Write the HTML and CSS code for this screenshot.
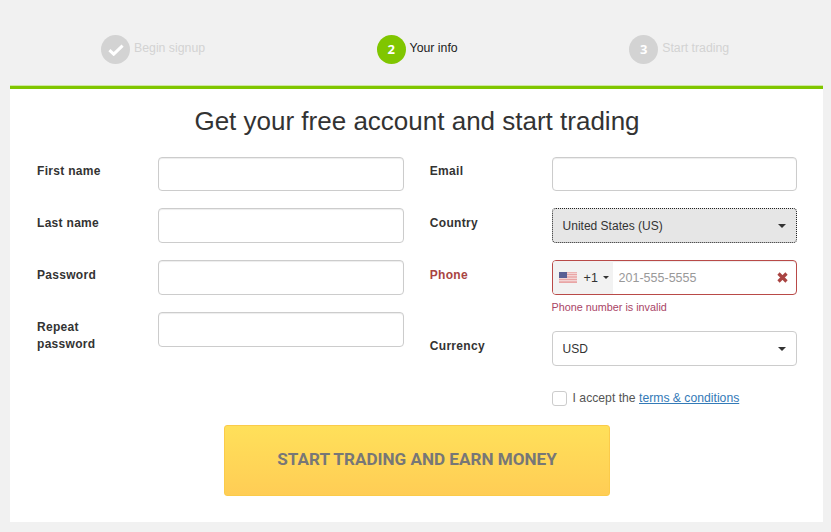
FILE: index.html
```html
<!DOCTYPE html>
<html lang="en">
<head>
  <meta charset="UTF-8">
  <meta name="viewport" content="width=device-width, initial-scale=1.0">
  <title>Get your free account</title>
  <link rel="stylesheet" href="styles.css">
</head>
<body>
  <!-- Steps -->
  <div class="steps">
    <div class="step done">
      <span class="step-circle">
        <svg width="16" height="12" viewBox="0 0 16 12"><path d="M1.4 6.2l4.3 4L14.6 1.6" fill="none" stroke="#fff" stroke-width="3"/></svg>
      </span>
      Begin signup
    </div>
    <div class="step active">
      <span class="step-circle">2</span>
      Your info
    </div>
    <div class="step">
      <span class="step-circle">3</span>
      Start trading
    </div>
  </div>

  <!-- Signup Form -->
  <form class="card">
    <h1>Get your free account and start trading</h1>

    <div class="columns">
      <div class="column">
        <div class="field">
          <label>First name</label>
          <input type="text" class="control">
        </div>
        <div class="field">
          <label>Last name</label>
          <input type="text" class="control">
        </div>
        <div class="field">
          <label>Password</label>
          <input type="password" class="control">
        </div>
        <div class="field">
          <label>Repeat password</label>
          <input type="password" class="control">
        </div>
      </div>

      <div class="column">
        <div class="field">
          <label>Email</label>
          <input type="text" class="control">
        </div>
        <div class="field">
          <label>Country</label>
          <button type="button" class="control select focused">United States (US)<span class="caret"></span></button>
        </div>
        <div class="field has-error">
          <label>Phone</label>
          <div class="field-body">
            <div class="control phone">
              <div class="dial">
                <svg class="flag" width="18" height="11" viewBox="0 0 18 11">
                  <rect width="18" height="11" fill="#e9a5a5"/>
                  <path d="M0 1.3h18M0 3.8h18M0 6.3h18M0 8.8h18" stroke="#f6e3e3" stroke-width="1.1"/>
                  <rect width="8" height="6" fill="#5a5f94"/>
                </svg>
                +1<span class="caret small"></span>
              </div>
              <input type="text" placeholder="201-555-5555">
              <svg class="clear" width="11" height="11" viewBox="0 0 11 11"><path d="M1.5 1.5l8 8M9.5 1.5l-8 8" stroke="#a94442" stroke-width="3.2"/></svg>
            </div>
            <div class="error">Phone number is invalid</div>
          </div>
        </div>
        <div class="field">
          <label>Currency</label>
          <button type="button" class="control select">USD<span class="caret"></span></button>
        </div>
        <div class="terms">
          <input type="checkbox" class="checkbox">
          <span>I accept the <a href="#">terms &amp; conditions</a></span>
        </div>
      </div>
    </div>

    <button type="button" class="submit">START TRADING AND EARN MONEY</button>
  </form>
</body>
</html>
```

FILE: styles.css
```css
/* General Styles */
body {
  margin: 0;
  background: #f1f1f1;
  font-family: 'Liberation Sans', Arial, sans-serif;
  font-size: 12px;
  color: #333;
}

/* Steps */
.steps {
  height: 86px;
  box-sizing: border-box;
  padding: 35px 0 0 101px;
  display: flex;
  align-items: flex-start;
  gap: 171.5px;
}

.step {
  display: flex;
  align-items: flex-start;
  gap: 4px;
  font-size: 12.3px;
  line-height: 27px;
  color: #d3d3d3;
}

.step-circle {
  width: 29px;
  height: 29px;
  border-radius: 50%;
  background: #d3d3d3;
  display: flex;
  align-items: center;
  justify-content: center;
  color: #fff;
  font-family: 'Open Sans', sans-serif;
  font-size: 13px;
  font-weight: 700;
}

.step.active {
  color: #222;
}

.step.active .step-circle {
  background: #80c600;
}

/* Card */
.card {
  margin: 0 8px 10px 10px;
  padding: 14px 0 0 27px;
  height: 436px;
  box-sizing: border-box;
  background: #fff;
  border-top: 3px solid #80c600;
  box-shadow: 0 -1px 0 #cfe89f;
}

.card h1 {
  margin: 0 26px 17.6px 0;
  font-size: 26px;
  font-weight: 400;
  line-height: 36px;
  text-align: center;
  color: #333;
}

.columns {
  display: flex;
  gap: 26px;
}

.column {
  width: 366.8px;
  display: flex;
  flex-direction: column;
  gap: 17.6px;
}

.column + .column {
  width: 367.4px;
}

/* Fields */
.field {
  display: flex;
}

.field label {
  width: 121.2px;
  flex: none;
  box-sizing: border-box;
  padding: 6.6px 20px 0 0;
  font-weight: 700;
  line-height: 17px;
  letter-spacing: 0.3px;
  color: #333;
}

.column + .column .field label {
  width: 121.8px;
}

.field-body {
  width: 245.6px;
}

.control {
  width: 245.6px;
  height: 34.3px;
  box-sizing: border-box;
  padding: 0 10px;
  border: 1px solid #ccc;
  border-radius: 4px;
  background: #fff;
  box-shadow: inset 0 1px 1px rgba(0, 0, 0, 0.075);
  font-family: inherit;
  font-size: 12px;
  color: #333;
}

.select {
  display: flex;
  align-items: center;
  justify-content: space-between;
  padding-top: 0.5px;
  box-shadow: none;
  text-align: left;
}

.select.focused {
  background: #e6e6e6;
  border: 1px dotted #222;
}

.caret {
  width: 0;
  height: 0;
  border-left: 4px solid transparent;
  border-right: 4px solid transparent;
  border-top: 4px solid #333;
}

.caret.small {
  border-left-width: 3px;
  border-right-width: 3px;
  border-top-width: 3px;
  margin-left: 5px;
}

/* Phone */
.phone {
  display: flex;
  align-items: center;
  padding: 0 8px 0 0;
  overflow: hidden;
}

.has-error label {
  color: #a94442;
}

.has-error .phone {
  border-color: #b94a48;
}

.dial {
  width: 60px;
  height: 100%;
  flex: none;
  box-sizing: border-box;
  padding-left: 6px;
  display: flex;
  align-items: center;
  background: #f2f2f2;
  font-size: 12.5px;
}

.flag {
  margin-right: 7px;
}

.phone input {
  flex: 1;
  min-width: 0;
  padding: 0 0 0 6px;
  border: none;
  outline: none;
  background: none;
  font-family: inherit;
  font-size: 12.5px;
  color: #333;
}

.phone input::placeholder {
  color: #999;
  opacity: 1;
}

.error {
  margin-top: 6.5px;
  font-size: 10.8px;
  line-height: 12.5px;
  color: #a94466;
}

/* Terms */
.terms {
  margin: 7.8px 0 0 121.8px;
  height: 15px;
  display: flex;
  align-items: center;
  gap: 6px;
  font-size: 12.2px;
  color: #555;
}

.checkbox {
  appearance: none;
  width: 15px;
  height: 15px;
  margin: 0;
  border: 1px solid #ccc;
  border-radius: 3px;
  background: #fff;
}

.terms a {
  color: #337ab7;
}

/* Submit */
.submit {
  display: block;
  width: 386px;
  height: 71px;
  margin: 19px 0 0 187px;
  padding: 0 0 2px;
  border: 1px solid #fbcb4a;
  border-radius: 3px;
  background: linear-gradient(#ffe05a, #ffcd55);
  font-family: Roboto, sans-serif;
  font-size: 17.1px;
  font-weight: 700;
  color: #777;
}
```
